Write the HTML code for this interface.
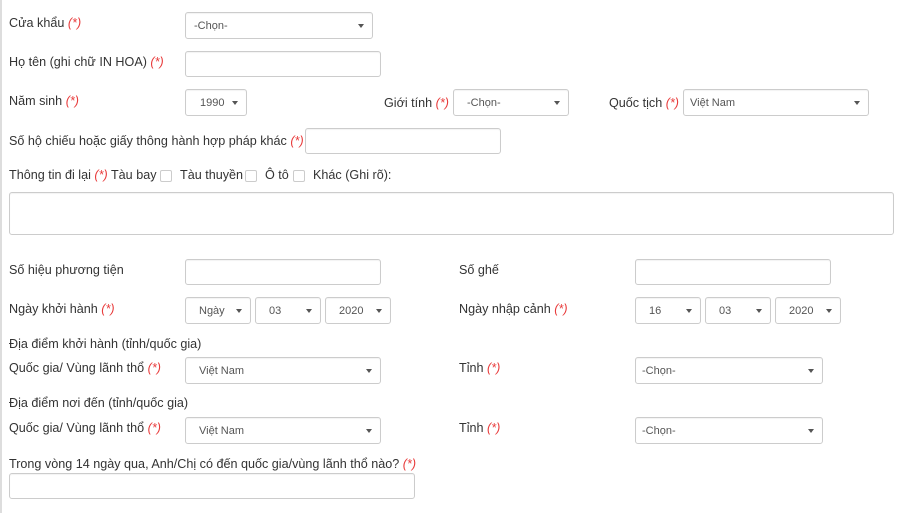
<!DOCTYPE html>
<html><head><meta charset="utf-8"><style>
body{margin:0;width:900px;height:513px;background:#fff;position:relative;overflow:hidden;font-family:"Liberation Sans",Arial,sans-serif;font-size:12.6px;color:#333;}
.l{position:absolute;white-space:nowrap;line-height:16px;}
.r{color:#e83a3a;font-style:italic;}
.b{position:absolute;border:1px solid #ccc;border-radius:3px;box-sizing:border-box;background:#fff;box-shadow:inset 0 1px 1px rgba(0,0,0,.05);}
.s{font-size:11px;color:#555;line-height:27px;padding-left:8px;}
.s::after{content:"";position:absolute;right:8px;top:11px;border-left:3px solid transparent;border-right:3px solid transparent;border-top:4px solid #555;}
.c{position:absolute;width:12px;height:12px;border:1px solid #ccc;border-radius:2px;box-sizing:border-box;}
.edge{position:absolute;left:0;top:0;width:2px;height:513px;background:#ddd;}
</style></head><body>
<div class="edge"></div>
<div class="l" style="left:9px;top:15px">Cửa khẩu <span class="r">(*)</span></div>
<div class="b s" style="left:185px;top:12px;width:188px;height:27px">-Chọn-</div>
<div class="l" style="left:9px;top:54px">Họ tên (ghi chữ IN HOA) <span class="r">(*)</span></div>
<div class="b" style="left:185px;top:51px;width:196px;height:26px"></div>
<div class="l" style="left:9px;top:93px">Năm sinh <span class="r">(*)</span></div>
<div class="b s" style="left:185px;top:89px;width:62px;height:27px;padding-left:14px">1990</div>
<div class="l" style="left:384px;top:95px">Giới tính <span class="r">(*)</span></div>
<div class="b s" style="left:453px;top:89px;width:116px;height:27px;padding-left:13px">-Chọn-</div>
<div class="l" style="left:609px;top:95px">Quốc tịch <span class="r">(*)</span></div>
<div class="b s" style="left:683px;top:89px;width:186px;height:27px;padding-left:6px">Việt Nam</div>
<div class="l" style="left:9px;top:133px">Số hộ chiếu hoặc giấy thông hành hợp pháp khác <span class="r">(*)</span></div>
<div class="b" style="left:305px;top:128px;width:196px;height:26px"></div>
<div class="l" style="left:9px;top:167px">Thông tin đi lại <span class="r">(*)</span> Tàu bay</div>
<div class="c" style="left:160px;top:170px"></div>
<div class="l" style="left:180px;top:167px">Tàu thuyền</div>
<div class="c" style="left:245px;top:170px"></div>
<div class="l" style="left:265px;top:167px">Ô tô</div>
<div class="c" style="left:293px;top:170px"></div>
<div class="l" style="left:313px;top:167px">Khác (Ghi rõ):</div>
<div class="b" style="left:9px;top:192px;width:885px;height:43px"></div>
<div class="l" style="left:9px;top:262px">Số hiệu phương tiện</div>
<div class="b" style="left:185px;top:259px;width:196px;height:26px"></div>
<div class="l" style="left:459px;top:262px">Số ghế</div>
<div class="b" style="left:635px;top:259px;width:196px;height:26px"></div>
<div class="l" style="left:9px;top:301px">Ngày khởi hành <span class="r">(*)</span></div>
<div class="b s" style="left:185px;top:297px;width:66px;height:27px;padding-left:13px">Ngày</div>
<div class="b s" style="left:255px;top:297px;width:66px;height:27px;padding-left:13px">03</div>
<div class="b s" style="left:325px;top:297px;width:66px;height:27px;padding-left:13px">2020</div>
<div class="l" style="left:459px;top:301px">Ngày nhập cảnh <span class="r">(*)</span></div>
<div class="b s" style="left:635px;top:297px;width:66px;height:27px;padding-left:13px">16</div>
<div class="b s" style="left:705px;top:297px;width:66px;height:27px;padding-left:13px">03</div>
<div class="b s" style="left:775px;top:297px;width:66px;height:27px;padding-left:13px">2020</div>
<div class="l" style="left:9px;top:336px">Địa điểm khởi hành (tỉnh/quốc gia)</div>
<div class="l" style="left:9px;top:360px">Quốc gia/ Vùng lãnh thổ <span class="r">(*)</span></div>
<div class="b s" style="left:185px;top:357px;width:196px;height:27px;padding-left:13px">Việt Nam</div>
<div class="l" style="left:459px;top:360px">Tỉnh <span class="r">(*)</span></div>
<div class="b s" style="left:635px;top:357px;width:188px;height:27px;padding-left:6px">-Chọn-</div>
<div class="l" style="left:9px;top:395px">Địa điểm nơi đến (tỉnh/quốc gia)</div>
<div class="l" style="left:9px;top:420px">Quốc gia/ Vùng lãnh thổ <span class="r">(*)</span></div>
<div class="b s" style="left:185px;top:417px;width:196px;height:27px;padding-left:13px">Việt Nam</div>
<div class="l" style="left:459px;top:420px">Tỉnh <span class="r">(*)</span></div>
<div class="b s" style="left:635px;top:417px;width:188px;height:27px;padding-left:6px">-Chọn-</div>
<div class="l" style="left:9px;top:456px">Trong vòng 14 ngày qua, Anh/Chị có đến quốc gia/vùng lãnh thổ nào? <span class="r">(*)</span></div>
<div class="b" style="left:9px;top:473px;width:406px;height:26px"></div>
</body></html>
